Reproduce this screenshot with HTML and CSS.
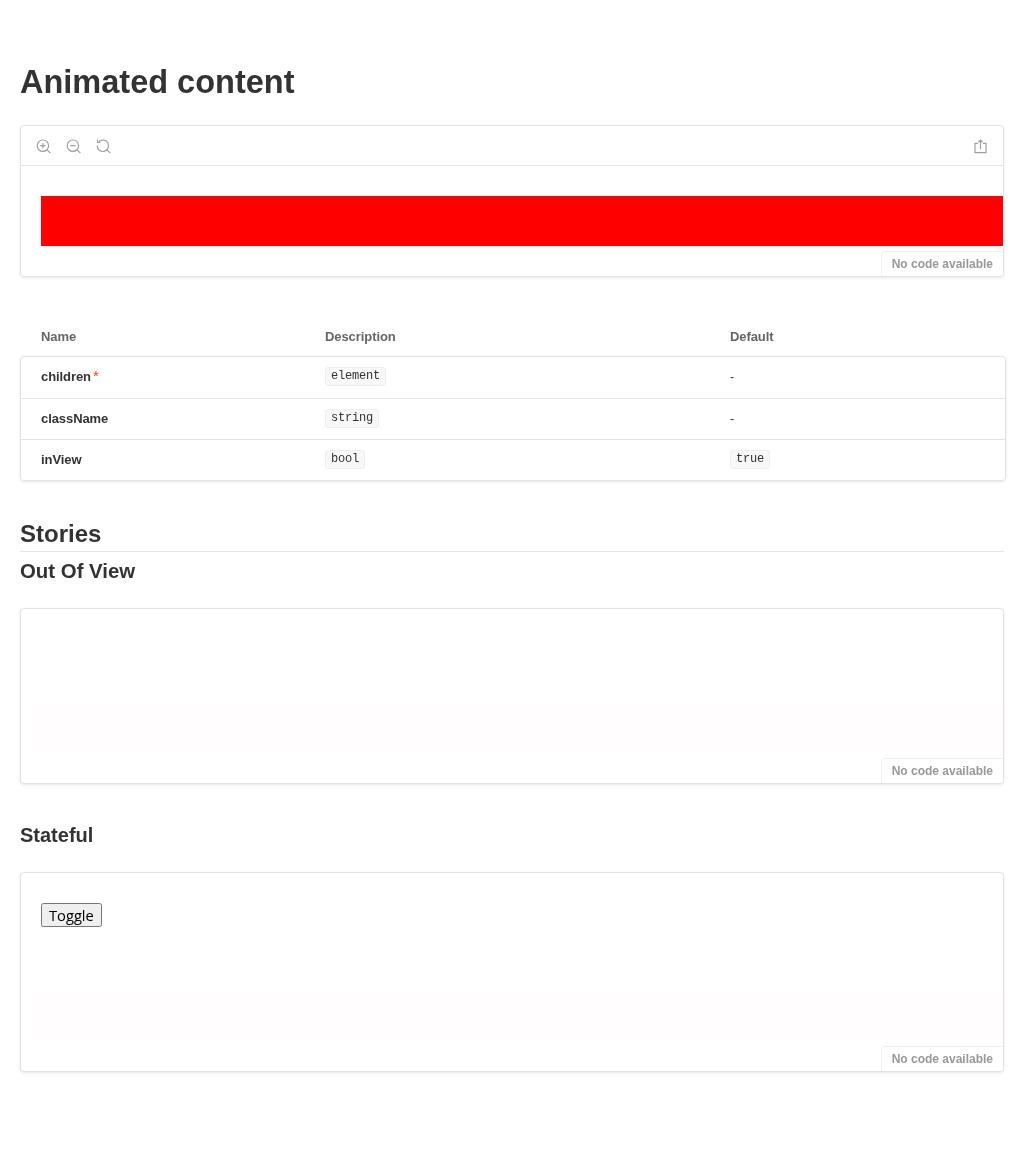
FILE: index.html
```html
<!DOCTYPE html>
<html>
  <head>
    <meta charset="UTF-8">
    <title>Animated content</title>
    <link rel="stylesheet" href="styles.css">
  </head>
  <body>
    <div class="docs">
      <h1>Animated content</h1>

      <div class="preview preview-main">
        <div class="toolbar">
          <div class="tools">
            <svg class="icon" viewBox="0 0 15 15"><circle cx="6.9" cy="6.7" r="5.7"/><path d="M6.9 4v5.4M4.2 6.7h5.4M11 10.8l3.4 3.4"/></svg>
            <svg class="icon" viewBox="0 0 15 15"><circle cx="6.9" cy="6.7" r="5.7"/><path d="M4.2 6.7h5.4M11 10.8l3.4 3.4"/></svg>
            <svg class="icon" viewBox="0 0 15 15"><path d="M3 2.6a5.7 5.7 0 1 1-1.8 4.1M1.6 .6v2.7h2.7M11 10.8l3.4 3.4"/></svg>
          </div>
          <svg class="icon" viewBox="0 0 15 15"><path d="M5 4.4H2v9.2h11V4.4h-3M7.5 10V1.2M5.4 3.2l2.1-2 2.1 2"/></svg>
        </div>
        <div class="stage stage-main">
          <div class="block block-red"></div>
        </div>
        <div class="no-code">No code available</div>
      </div>

      <div class="props">
        <div class="props-head">
          <div>Name</div>
          <div>Description</div>
          <div>Default</div>
        </div>
        <div class="props-card">
          <div class="prop-row prop-row-tall">
            <div class="prop-name">children<span class="req">*</span></div>
            <div class="prop-type"><code>element</code></div>
            <div class="prop-text">-</div>
          </div>
          <div class="prop-row">
            <div class="prop-name">className</div>
            <div class="prop-type"><code>string</code></div>
            <div class="prop-text">-</div>
          </div>
          <div class="prop-row">
            <div class="prop-name">inView</div>
            <div class="prop-type"><code>bool</code></div>
            <div class="prop-type"><code>true</code></div>
          </div>
        </div>
      </div>

      <h2>Stories</h2>
      <h3 class="first">Out Of View</h3>

      <div class="preview">
        <div class="stage stage-out">
          <div class="block block-faint"></div>
        </div>
        <div class="no-code">No code available</div>
      </div>

      <h3>Stateful</h3>

      <div class="preview">
        <div class="stage stage-state">
          <button class="toggle">Toggle</button>
          <div class="block block-faint"></div>
        </div>
        <div class="no-code">No code available</div>
      </div>
    </div>
  </body>
</html>
```

FILE: styles.css
```css
body {
	background: #fff;
	color: #333;
	font-family: "Liberation Sans", Arial, sans-serif;
	margin: 0;
}
.docs {
	padding: 64px 20px 104px;
	will-change: transform; /* keeps text antialiasing grey */
}
h1 {
	font-size: 32.5px;
	font-weight: 700;
	line-height: 36px;
	margin: 0 0 25px;
}
h2 {
	border-bottom: 1px solid #e6e6e6;
	font-size: 24px;
	font-weight: 700;
	line-height: 30px;
	margin: 38px 0 0;
	padding-bottom: 2px;
}
h3 {
	font-size: 20px;
	font-weight: 700;
	line-height: 24px;
	margin: 39px 0 25px;
}
h3.first {
	font-size: 20.4px;
	margin-top: 7px;
}
.preview {
	background: #fff;
	border: 1px solid #e3e3e3;
	border-radius: 4px;
	box-shadow: 0 1px 3px rgba(0, 0, 0, 0.1);
	overflow: hidden;
	position: relative;
}
.toolbar {
	align-items: center;
	border-bottom: 1px solid #e3e3e3;
	box-sizing: border-box;
	display: flex;
	height: 40px;
	justify-content: space-between;
	padding: 1px 15px 0;
}
.tools {
	display: flex;
	gap: 15px;
}
.icon {
	display: block;
	fill: none;
	height: 15px;
	stroke: #a0a0a0;
	stroke-width: 1.2;
	width: 15px;
}
.stage {
	box-sizing: border-box;
	padding-left: 20px;
}
.stage-main {
	height: 110px;
	padding-top: 30px;
}
.stage-out {
	height: 174px;
	padding-top: 94px;
}
.stage-state {
	height: 198px;
	padding-top: 30px;
}
.block {
	height: 50px;
}
.block-red {
	background: #f00;
}
.block-faint {
	background: #fffdfe;
	margin-left: 1px;
}
.stage-state .block {
	margin-top: 63px;
}
.toggle {
	display: block;
	font-family: "Open Sans", sans-serif;
	font-size: 14.7px;
	height: 24px;
	line-height: 20px;
	padding: 0 6px 2px;
}
.no-code {
	background: #fff;
	border-left: 1px solid #f0f0f0;
	border-top: 1px solid #f0f0f0;
	border-top-left-radius: 4px;
	bottom: 0;
	color: #999;
	font-size: 12px;
	font-weight: 700;
	line-height: 14px;
	padding: 5px 10px;
	position: absolute;
	right: 0;
}
.props {
	font-size: 13px;
	letter-spacing: -0.08px;
	line-height: 15px;
	margin-top: 40px;
	width: 986px;
}
.props-head {
	box-sizing: border-box;
	color: #666;
	display: grid;
	font-weight: 700;
	grid-template-columns: 284px 405px 1fr;
	height: 39px;
	padding-left: 21px;
	padding-top: 12px;
}
.props-card {
	border: 1px solid #e3e3e3;
	border-radius: 4px;
	box-shadow: 0 1px 3px rgba(0, 0, 0, 0.1);
}
.prop-row {
	border-top: 1px solid #e3e3e3;
	box-sizing: border-box;
	display: grid;
	grid-template-columns: 284px 405px 1fr;
	height: 41px;
	padding-left: 20px;
}
.prop-row-tall {
	border-top: 0;
}
.prop-name,
.prop-text {
	padding-top: 12px;
}
.prop-name {
	font-weight: 700;
}
.prop-type {
	padding-top: 10px;
}
.req {
	color: #ff4400;
	font-size: 15px;
	font-weight: 400;
	line-height: 0;
	margin-left: 2px;
}
code {
	background: #f8f8f8;
	border: 1px solid #eee;
	border-radius: 3px;
	color: #333;
	display: inline-block;
	font-family: "Liberation Mono", monospace;
	font-size: 12px;
	letter-spacing: -0.2px;
	line-height: 16px;
	padding: 0 5px 1px;
	vertical-align: top;
}
```
